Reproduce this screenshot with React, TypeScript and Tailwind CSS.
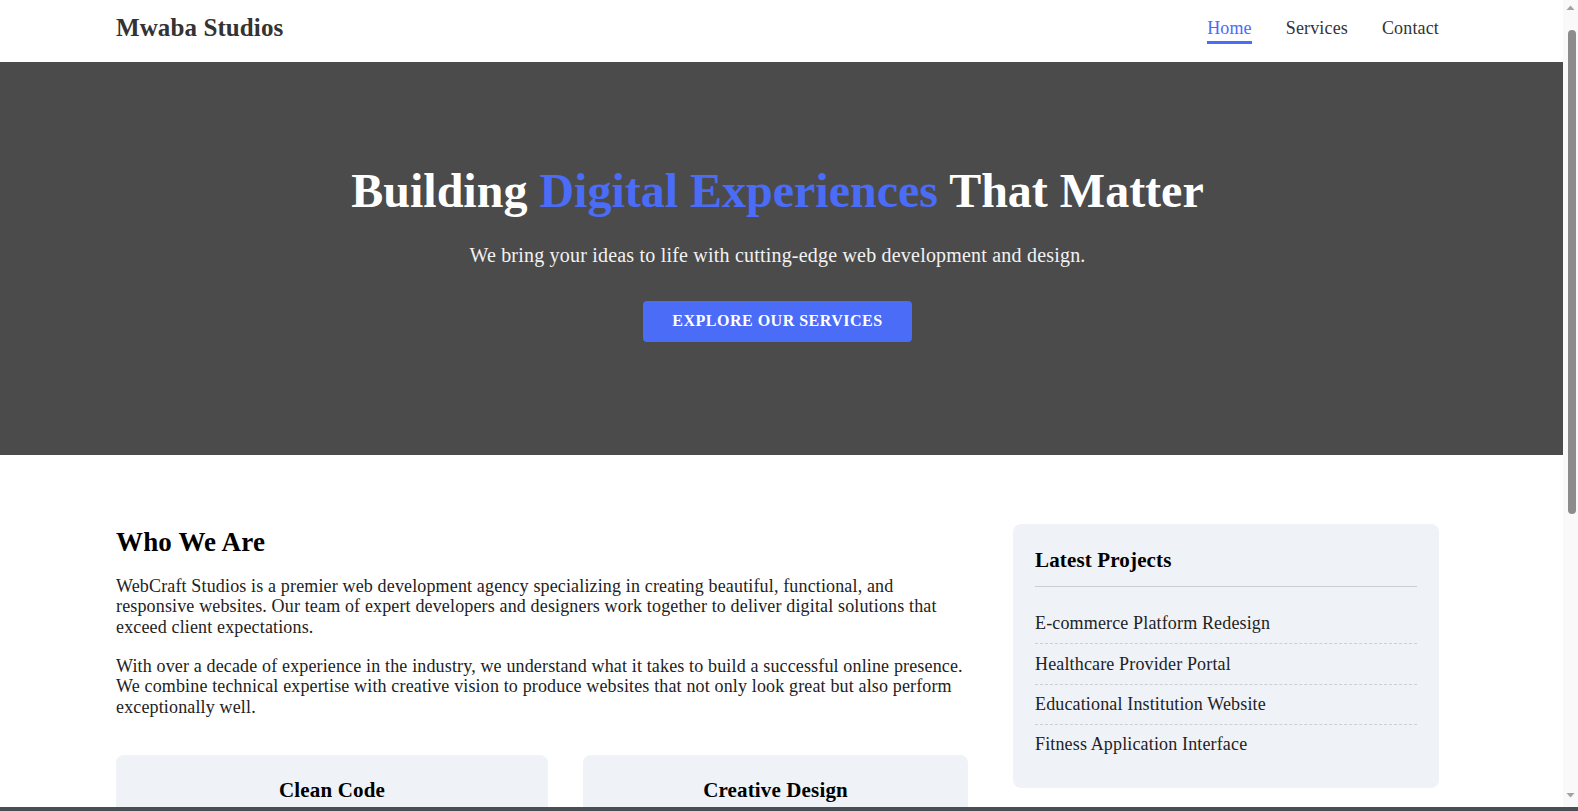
import React from "react";

const NAV_LINKS = ["Home", "Services", "Contact"];

const PROJECTS = [
  "E-commerce Platform Redesign",
  "Healthcare Provider Portal",
  "Educational Institution Website",
  "Fitness Application Interface",
];

const FEATURES = [
  {
    title: "Clean Code",
    text: "We write maintainable, well-documented code that follows modern best practices and scales with your business.",
  },
  {
    title: "Creative Design",
    text: "Unique, eye-catching designs tailored to your brand and built around your users.",
  },
];

const SERVICES = [
  { title: "Web Development", text: "Custom websites and web applications built with modern frameworks." },
  { title: "UI/UX Design", text: "Intuitive interfaces that keep your visitors engaged and converting." },
  { title: "E-commerce", text: "Online stores with secure payments and easy product management." },
];

// Browser scrollbar as it shows in the screenshot
function FakeScrollbar() {
  return (
    <div className="fixed top-0 right-0 bottom-0 w-[15px] bg-[#f9f9f9] z-10">
      <svg className="absolute top-[5px] left-[3px]" width="9" height="6" viewBox="0 0 9 6">
        <path d="M4.5 0.5 L8.5 5 L0.5 5 Z" fill="#a3a3a3" />
      </svg>
      <div className="absolute top-[30px] left-[5px] w-[8px] h-[484px] rounded-full bg-[#8c8c8c]" />
      <svg className="absolute bottom-[13px] left-[3px]" width="9" height="6" viewBox="0 0 9 6">
        <path d="M0.5 1 L8.5 1 L4.5 5.5 Z" fill="#a3a3a3" />
      </svg>
    </div>
  );
}

export default function App() {
  return (
    <div className="min-h-screen bg-white text-[18px] tracking-[0.15px] text-[#222] font-['Liberation_Serif','Times_New_Roman',serif]">
      <div className="w-[1563px]">
        {/* Header */}
        <header className="bg-white">
          <div className="ml-[116px] w-[1323px] h-[62px] flex items-start justify-between">
            <div className="mt-[14px] text-[25px] leading-[1.15] font-bold text-[#333] tracking-[0.1px]">
              Mwaba Studios
            </div>
            <nav className="mt-[17.5px] flex gap-[34px] tracking-[0.15px]">
              {NAV_LINKS.map((link, i) => (
                <a
                  key={link}
                  href="#"
                  className={`leading-[20.7px] pb-[3px] border-b-[3px] ${
                    i === 0 ? "text-[#4a6cf7] border-[#4a6cf7]" : "text-[#333] border-transparent"
                  }`}
                >
                  {link}
                </a>
              ))}
            </nav>
          </div>
        </header>

        {/* Hero */}
        <section className="bg-[#4b4b4b] text-white pt-[100px] pb-[113px]">
          <div className="ml-[116px] w-[1323px] text-center">
            <h1 className="text-[48px] leading-[1.2] font-bold tracking-normal">
              Building <span className="text-[#4a6cf7]">Digital Experiences</span> That Matter
            </h1>
            <p className="mt-[20.4px] text-[20px] leading-[30px] tracking-[0.2px] text-[#f2f2f2]">
              We bring your ideas to life with cutting-edge web development and design.
            </p>
            <div className="mt-[31px] flex justify-center">
              <a
                href="#"
                className="h-[41px] px-[29.5px] flex items-center rounded-[4px] bg-[#4a6cf7] text-white text-[16px] font-bold uppercase tracking-[0.5px]"
              >
                Explore Our Services
              </a>
            </div>
          </div>
        </section>

        {/* About */}
        <section className="pt-[69px] pb-[72px]">
          <div className="ml-[116px] w-[1323px] grid grid-cols-[2fr_1fr] gap-[45px] items-start">
            <div>
              <h2 className="pt-[2px] text-[27px] leading-[1.25] font-bold text-black mb-[16px]">Who We Are</h2>
              <p className="leading-[1.15] mb-[18px]">
                WebCraft Studios is a premier web development agency specializing in creating beautiful, functional, and
                responsive websites. Our team of expert developers and designers work together to deliver digital
                solutions that exceed client expectations.
              </p>
              <p className="leading-[1.15]">
                With over a decade of experience in the industry, we understand what it takes to build a successful
                online presence. We combine technical expertise with creative vision to produce websites that not only
                look great but also perform exceptionally well.
              </p>

              <div className="mt-[37px] grid grid-cols-[432px_385px] gap-[35px]">
                {FEATURES.map((f) => (
                  <div key={f.title} className="bg-[#eff2f7] rounded-lg pt-[23px] px-6 pb-6 text-center">
                    <h3 className="text-[21px] leading-[1.15] font-bold text-black">{f.title}</h3>
                    <p className="mt-4 leading-[1.4] text-[#444]">{f.text}</p>
                  </div>
                ))}
              </div>
            </div>

            <aside className="bg-[#eff2f7] rounded-lg px-[22px] pt-6 pb-6">
              <h3 className="text-[21px] leading-[1.15] font-bold text-black pb-[14px] border-b border-[#c9cdd4]">
                Latest Projects
              </h3>
              <ul className="mt-[17px]">
                {PROJECTS.map((p, i) => (
                  <li
                    key={p}
                    className={`leading-[20.7px] py-[9.3px] ${
                      i < PROJECTS.length - 1 ? "border-b border-dashed border-[#ccd0d6]" : ""
                    }`}
                  >
                    {p}
                  </li>
                ))}
              </ul>
            </aside>
          </div>
        </section>

        {/* Services */}
        <section className="bg-[#f7f8fa] py-[72px]">
          <div className="ml-[116px] w-[1323px]">
            <h2 className="text-[27px] leading-[1.25] font-bold text-black text-center mb-[40px]">Our Services</h2>
            <div className="grid grid-cols-3 gap-[35px]">
              {SERVICES.map((s) => (
                <div key={s.title} className="bg-white rounded-lg p-6 shadow-sm">
                  <h3 className="text-[21px] leading-[1.15] font-bold text-black mb-3">{s.title}</h3>
                  <p className="leading-[1.4] text-[#444]">{s.text}</p>
                </div>
              ))}
            </div>
          </div>
        </section>

        {/* Footer */}
        <footer className="bg-[#333] text-[#ddd] py-[48px]">
          <div className="ml-[116px] w-[1323px] text-center text-[16px]">
            &copy; 2024 Mwaba Studios. All rights reserved.
          </div>
        </footer>
      </div>

      <FakeScrollbar />
      <div className="fixed bottom-0 left-0 right-0 h-[4px] bg-[#4a4e54] z-20" />
    </div>
  );
}
